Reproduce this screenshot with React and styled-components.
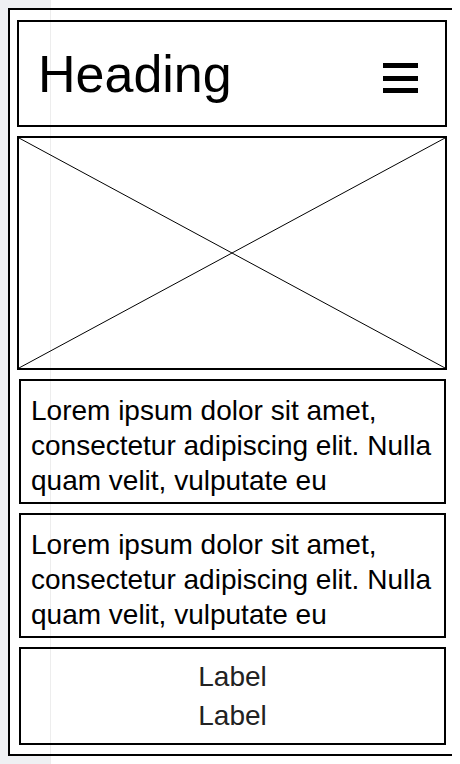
import React from 'react';
import styled, { createGlobalStyle } from 'styled-components';

const GlobalStyle = createGlobalStyle`
  body {
    margin: 8px;
    background: linear-gradient(to right, #eff0f3 50px, #ffffff 50px);
    font-family: "Liberation Sans", Arial, Helvetica, sans-serif;
    color: #000;
  }
`;

const GuideLine = styled.div`
  position: fixed;
  top: 0;
  bottom: 0;
  left: 50px;
  width: 1px;
  background: rgba(0, 0, 0, 0.07);
  pointer-events: none;
  z-index: 10;
`;

const Frame = styled.div`
  width: 447px;
  box-sizing: border-box;
  border: 2px solid #000;
  background: #fff;
  padding: 10px 6px 9px 7px;
  display: flex;
  flex-direction: column;
  gap: 9px;
`;

const Header = styled.header`
  height: 107px;
  box-sizing: border-box;
  border: 2px solid #000;
  display: flex;
  align-items: center;
  justify-content: space-between;
  padding: 0 27px 0 19px;
`;

const Heading = styled.h1`
  margin: 0;
  font-size: 52px;
  font-weight: 400;
  line-height: 1;
`;

const Menu = styled.div`
  display: flex;
  flex-direction: column;
  gap: 7.5px;
  margin-top: 9px;
`;

const MenuBar = styled.span`
  display: block;
  width: 35px;
  height: 5px;
  background: #000;
`;

const Placeholder = styled.div`
  height: 234px;
  box-sizing: border-box;
  border: 2px solid #000;

  svg {
    display: block;
    width: 100%;
    height: 100%;
  }
`;

const Card = styled.div`
  box-sizing: border-box;
  border: 2px solid #000;
  margin: 0 1px 0 2px;
  padding: ${({ $center }) => ($center ? '8px 10px' : '12px 10px 4px')};
  font-size: 28px;
  line-height: ${({ $center }) => ($center ? '39px' : '35px')};
  text-align: ${({ $center }) => ($center ? 'center' : 'left')};
  color: ${({ $center }) => ($center ? '#222' : '#000')};
`;

const lorem =
  'Lorem ipsum dolor sit amet, consectetur adipiscing elit. Nulla quam velit, vulputate eu';

export default function App() {
  return (
    <>
      <GlobalStyle />
      <GuideLine />
      <Frame>
        <Header>
          <Heading>Heading</Heading>
          <Menu>
            <MenuBar />
            <MenuBar />
            <MenuBar />
          </Menu>
        </Header>
        <Placeholder>
          <svg viewBox="0 0 100 100" preserveAspectRatio="none">
            <line x1="0" y1="0" x2="100" y2="100" stroke="#000" strokeWidth="1" vectorEffect="non-scaling-stroke" />
            <line x1="100" y1="0" x2="0" y2="100" stroke="#000" strokeWidth="1" vectorEffect="non-scaling-stroke" />
          </svg>
        </Placeholder>
        <Card>{lorem}</Card>
        <Card>{lorem}</Card>
        <Card $center>
          Label
          <br />
          Label
        </Card>
      </Frame>
    </>
  );
}
